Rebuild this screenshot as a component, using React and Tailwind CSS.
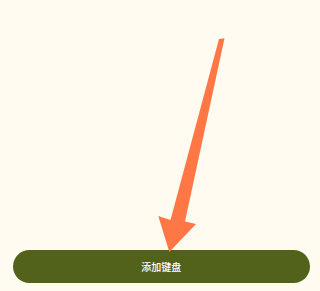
const Arrow = () => (
  <svg
    className="absolute inset-0 pointer-events-none"
    width="320"
    height="291"
    viewBox="0 0 320 291"
  >
    <polygon
      points="219,39 224.5,38.3 185,221.5 196,224 169.3,252 158.3,216 170.5,220"
      fill="#ff7744"
    />
  </svg>
);

const App = () => {
  return (
    <div className="relative w-[320px] h-[291px] bg-[#fffbf1] flex flex-col justify-end overflow-hidden">
      <div className="pl-[12.5px] pr-[10px] pb-[8px]">
        <button className="w-full h-[33px] rounded-full bg-[#52621b] text-white text-[10px] font-medium font-['Noto_Sans_CJK_SC',sans-serif] flex items-center justify-center">
          添加键盘
        </button>
      </div>
      <Arrow />
    </div>
  );
};

export default App;
